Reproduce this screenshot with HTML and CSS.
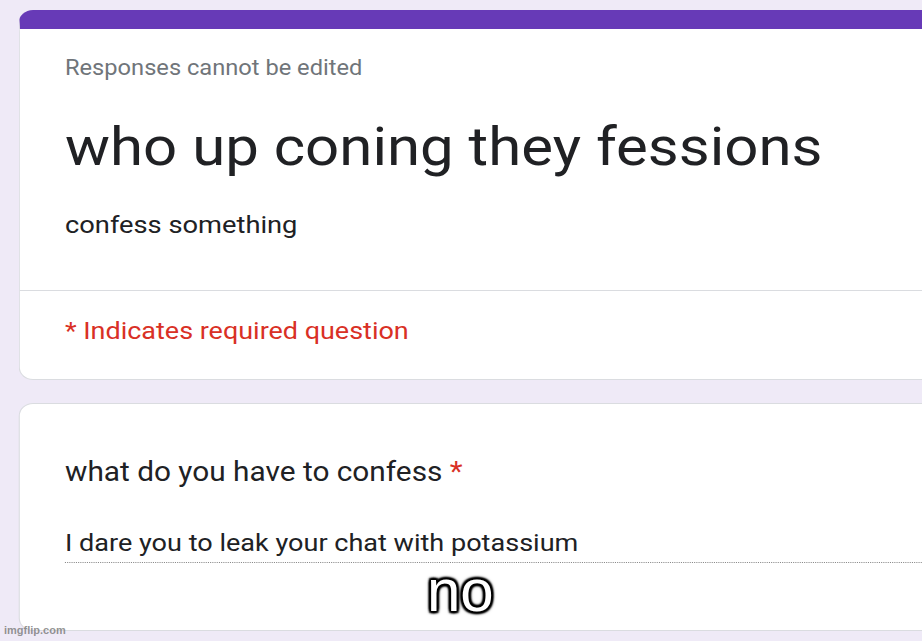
FILE: index.html
```html
<!DOCTYPE html>
<html>
<head>
<meta charset="utf-8">
<link rel="stylesheet" href="styles.css">
</head>
<body>
<div class="page">
  <div class="card card-head">
    <div class="head-top">
      <div class="note">Responses cannot be edited</div>
      <div class="title">who up coning they fessions</div>
      <div class="desc">confess something</div>
    </div>
    <div class="head-bottom">
      <div class="req">* Indicates required question</div>
    </div>
  </div>
  <div class="card card-q">
    <div class="question">what do you have to confess <span class="star">*</span></div>
    <div class="answer">I dare you to leak your chat with potassium</div>
  </div>
</div>
<div class="meme">no</div>
<div class="wm">imgflip.com</div>
</body>
</html>
```
FILE: styles.css
```css
html, body {
  margin: 0;
  padding: 0;
}
body {
  width: 922px;
  height: 641px;
  overflow: hidden;
  background: #efeaf7;
  font-family: Roboto, "Noto Sans", sans-serif;
  position: relative;
}
.page {
  display: flex;
  flex-direction: column;
  gap: 23px;
  padding: 10px 0 0 17.3px;
  transform: scaleX(1.1);
  transform-origin: 0 0;
}
.card {
  width: 900px;
  background: #fff;
  border: 1px solid #dadce0;
  border-radius: 13px;
  box-sizing: border-box;
}
.card-head {
  border-top: 19px solid #673ab7;
  border-color: #673ab7 #dadce0 #dadce0 #dadce0;
}
.head-top {
  padding: 24px 0 49px 40.8px;
  border-bottom: 1px solid #dadce0;
}
.note {
  font-size: 21.5px;
  line-height: 30px;
  color: #70757a;
}
.title {
  font-size: 54.5px;
  line-height: 70px;
  color: #202124;
  margin-top: 28px;
}
.desc {
  font-size: 24.8px;
  line-height: 32px;
  color: #202124;
  margin-top: 28px;
}
.head-bottom {
  padding: 24px 0 32px 40.8px;
}
.req {
  font-size: 24.5px;
  line-height: 32px;
  color: #d93025;
}
.card-q {
  padding: 50px 0 67px 40.8px;
}
.question {
  font-size: 27.1px;
  line-height: 36px;
  color: #202124;
}
.star {
  color: #d93025;
}
.answer {
  font-size: 24.6px;
  line-height: 32px;
  color: #202124;
  margin-top: 37px;
  padding-bottom: 3px;
  border-bottom: 1px dotted #8a8a8a;
}
.meme {
  position: absolute;
  left: 427px;
  top: 561px;
  font-family: "Liberation Sans", Arial, sans-serif;
  font-size: 60px;
  line-height: 60px;
  color: #fff;
  text-shadow: 2px 0 2px #000, -2px 0 2px #000, 0 2px 2px #000, 0 -2px 2px #000,
    2px 2px 2px #000, -2px -2px 2px #000, 2px -2px 2px #000, -2px 2px 2px #000,
    0 0 5px #000;
}
.wm {
  position: absolute;
  left: 4px;
  top: 624px;
  font-family: "Liberation Sans", Arial, sans-serif;
  font-size: 11px;
  font-weight: bold;
  color: rgba(120, 120, 120, 0.8);
}
```
